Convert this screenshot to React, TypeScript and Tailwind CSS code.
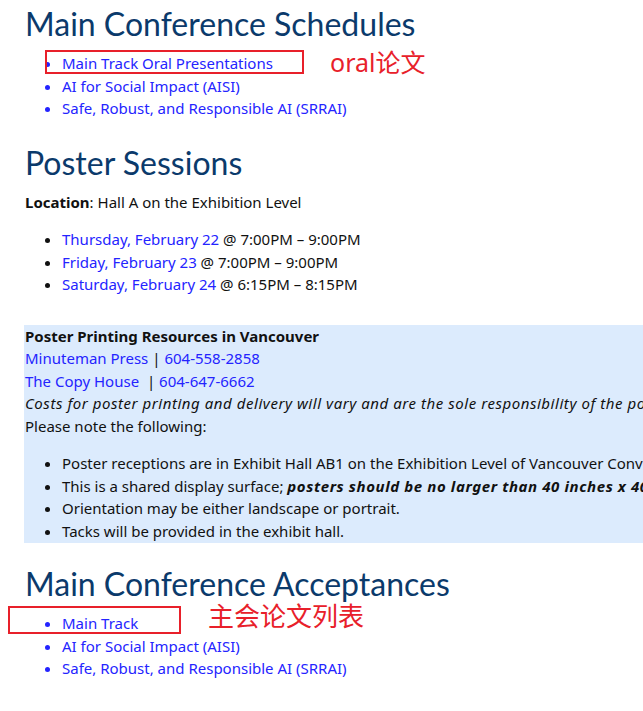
export default function App() {
  const body = "font-['Segoe_UI','Noto_Sans',sans-serif] text-[15px] leading-[22.5px] text-[#111]";
  const h = "font-['Lato',sans-serif] text-[32px] leading-[40px] text-[#0b3a6b] pl-[25px]";
  const link = "text-[#2424ff]";

  return (
    <div className={`w-[643px] h-[711px] overflow-hidden bg-white ${body}`}>
      <div className="w-[900px]">
        <h1 className={`${h} pt-[4px]`}>Main Conference Schedules</h1>
        <div className="relative">
          <ul className="list-disc pl-[62px] mt-[8px]">
            <li className={link}>Main Track Oral Presentations</li>
            <li className={link}>AI for Social Impact (AISI)</li>
            <li className={link}>Safe, Robust, and Responsible AI (SRRAI)</li>
          </ul>
          <div className="absolute left-[45px] top-[-2px] w-[259px] h-[24px] border-2 border-[#e8202a]" />
          <div className="absolute left-[330px] top-[-5px] text-[25px] leading-[30px] text-[#e8202a] font-['Noto_Sans','Noto_Sans_CJK_SC',sans-serif]">
            oral论文
          </div>
        </div>

        <h2 className={`${h} mt-[23px]`}>Poster Sessions</h2>
        <p className="pl-[25px] mt-[8px]">
          <b>Location</b>: Hall A on the Exhibition Level
        </p>
        <ul className="list-disc pl-[62px] mt-[15px]">
          <li>
            <span className={link}>Thursday, February 22</span> @ 7:00PM – 9:00PM
          </li>
          <li>
            <span className={link}>Friday, February 23</span> @ 7:00PM – 9:00PM
          </li>
          <li>
            <span className={link}>Saturday, February 24</span> @ 6:15PM – 8:15PM
          </li>
        </ul>

        <div className="ml-[24px] mt-[29px] bg-[#dcebfd] pl-[1px] pb-[1px] w-[860px]">
          <p className="font-bold">Poster Printing Resources in Vancouver</p>
          <p>
            <span className={link}>Minuteman Press</span> | <span className={link}>604-558-2858</span>
          </p>
          <p>
            <span className={link}>The Copy House</span>&nbsp; | <span className={link}>604-647-6662</span>
          </p>
          <p className="italic tracking-[0.55px]">
            Costs for poster printing and delivery will vary and are the sole responsibility of the poster presenters.
          </p>
          <p>Please note the following:</p>
          <ul className="list-disc pl-[37px] mt-[15px]">
            <li>Poster receptions are in Exhibit Hall AB1 on the Exhibition Level of Vancouver Convention Centre West.</li>
            <li>
              This is a shared display surface;{" "}
              <b className="italic tracking-[0.6px]">posters should be no larger than 40 inches x 40 inches.</b>
            </li>
            <li>Orientation may be either landscape or portrait.</li>
            <li>Tacks will be provided in the exhibit hall.</li>
          </ul>
        </div>

        <h2 className={`${h} mt-[21px]`}>Main Conference Acceptances</h2>
        <div className="relative">
          <ul className="list-disc pl-[62px] mt-[8px]">
            <li className={link}>Main Track</li>
            <li className={link}>AI for Social Impact (AISI)</li>
            <li className={link}>Safe, Robust, and Responsible AI (SRRAI)</li>
          </ul>
          <div className="absolute left-[8px] top-[-6px] w-[173px] h-[28px] border-2 border-[#e8202a]" />
          <div className="absolute left-[208px] top-[-12px] text-[26px] leading-[30px] text-[#e8202a] font-['Noto_Sans_CJK_SC',sans-serif]">
            主会论文列表
          </div>
        </div>
      </div>
    </div>
  );
}
